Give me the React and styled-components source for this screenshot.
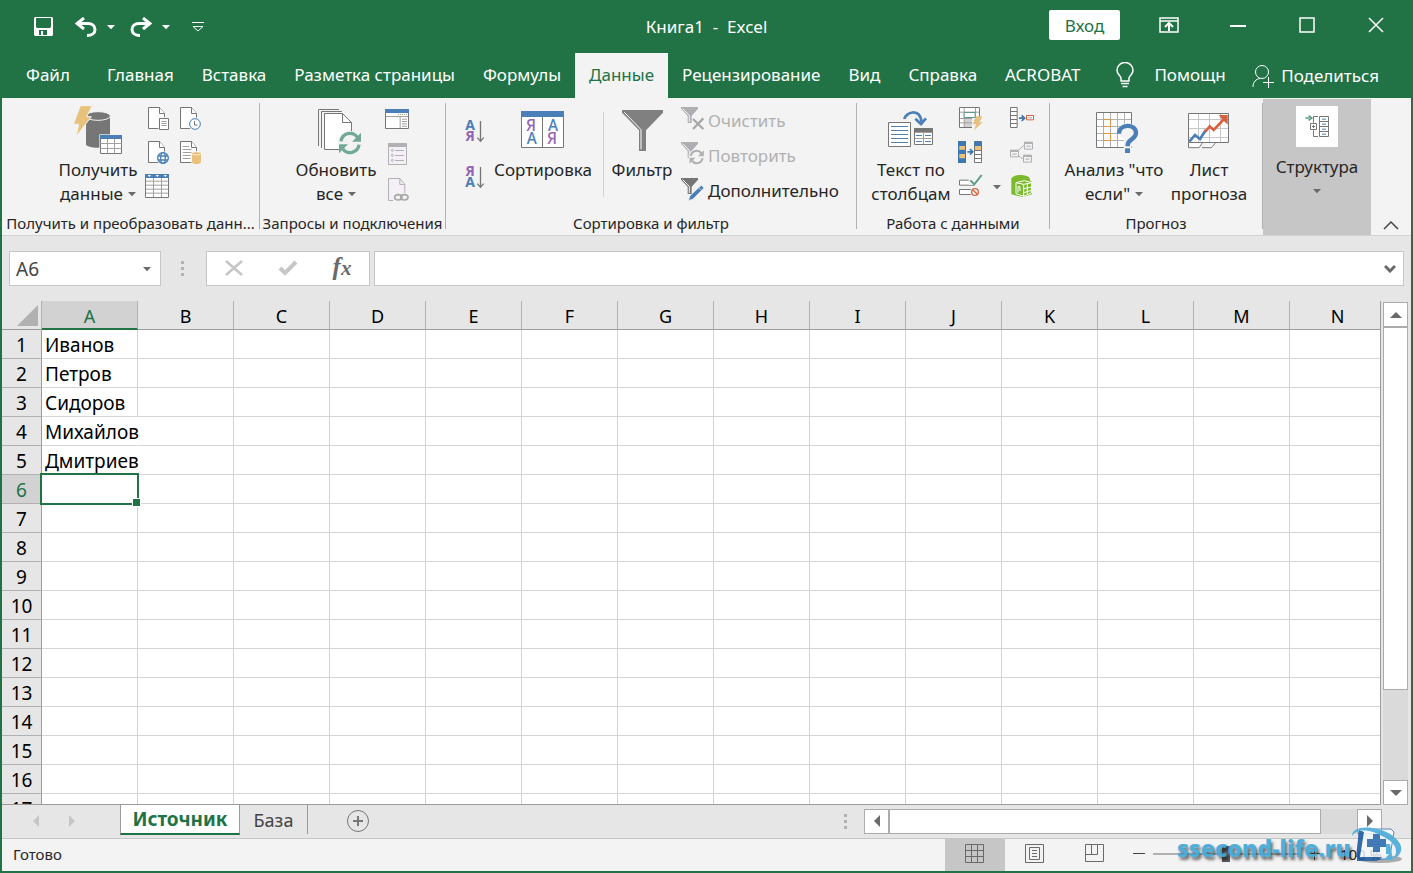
import React, { useState } from "react";
import styled, { createGlobalStyle } from "styled-components";

const GlobalStyle = createGlobalStyle`
  * {
    box-sizing: border-box;
  }
  body {
    margin: 0;
    font-family: "Noto Sans", "Open Sans", sans-serif;
    font-size: 17px;
    color: #262626;
  }
  button, input {
    font: inherit;
    color: inherit;
    margin: 0;
    padding: 0;
    border: 0;
    background: none;
  }
  svg {
    display: block;
    flex: none;
  }
`;

const Window = styled.div`
  display: flex;
  flex-direction: column;
  height: 100vh;
  background: #e6e6e6;
  border: 2px solid #217346;
  border-top: 0;
  overflow: hidden;
`;

/* title bar */

const TitleBar = styled.header`
  display: grid;
  grid-template-columns: 1fr auto 1fr;
  align-items: center;
  height: 53px;
  background: #217346;
  color: #fff;
`;

const QuickAccess = styled.div`
  display: flex;
  align-items: center;
  padding-left: 30px;
`;

const QuickButton = styled.button`
  display: flex;
  align-items: center;
  justify-content: center;
  width: ${(p) => p.$width}px;
  height: 32px;
  margin-right: ${(p) => p.$space || 0}px;
`;

const Title = styled.h1`
  margin: 0;
  font-size: 17px;
  font-weight: 400;
  white-space: pre;
`;

const WindowControls = styled.div`
  display: flex;
  align-items: center;
  justify-content: flex-end;
  padding-right: 1px;
`;

const SignIn = styled.button`
  width: 71px;
  height: 30px;
  margin: 0 14px 3px 0;
  border-radius: 2px;
  background: #fff;
  color: #217346;
`;

const ControlButton = styled.button`
  display: flex;
  align-items: center;
  justify-content: center;
  width: 69px;
  height: 50px;
  margin-bottom: 3px;
`;

/* ribbon tabs */

const TabRow = styled.nav`
  display: flex;
  height: 45px;
  padding-left: 10px;
  background: #217346;
  color: #fff;
`;

const Tab = styled.button`
  height: 45px;
  padding: 0 14px 2px;
  white-space: nowrap;
  margin-right: ${(p) => (p.$file ? 9 : 0)}px;
  background: ${(p) => (p.$active ? "#f3f3f3" : "transparent")};
  color: ${(p) => (p.$active ? "#217346" : "#fff")};
`;

const TabTool = styled.button`
  display: flex;
  align-items: center;
  gap: ${(p) => p.$gap}px;
  margin-left: ${(p) => (p.$end ? "auto" : "22px")};
  padding: ${(p) => (p.$end ? "0 32px 0 0" : "0 0 2px")};
  white-space: nowrap;
`;

/* ribbon */

const Ribbon = styled.section`
  display: flex;
  height: 138px;
  background: #f3f3f3;
  border-bottom: 1px solid #d2d2d2;
`;

const Group = styled.div`
  display: flex;
  flex-direction: column;
  width: ${(p) => p.$width}px;
`;

const GroupBody = styled.div`
  display: flex;
  flex: 1;
  padding-left: ${(p) => p.$pad || 0}px;
`;

const GroupLabel = styled.div`
  height: 23px;
  line-height: 22px;
  font-size: 15px;
  text-align: center;
  white-space: nowrap;
`;

const Divider = styled.div`
  width: 1px;
  margin: ${(p) => (p.$inner ? "14px 0 15px 7px" : "5px 0 6px")};
  background: ${(p) => (p.$inner ? "#d2d2d2" : "#b1b1b1")};
`;

const BigButton = styled.button`
  display: flex;
  flex-direction: column;
  align-items: center;
  width: ${(p) => p.$width}px;
  padding-top: 8px;
  line-height: 24px;
  white-space: nowrap;
`;

const IconGrid = styled.div`
  display: grid;
  grid-template-columns: ${(p) => p.$columns};
  grid-auto-rows: 34px;
  padding-top: 4px;
`;

const SmallButton = styled.button`
  display: flex;
  align-items: center;
  justify-content: center;
`;

const SortColumn = styled.div`
  display: flex;
  flex-direction: column;
  padding-top: 10px;
`;

const FilterList = styled.div`
  display: flex;
  flex-direction: column;
  padding-top: 5px;
`;

const FilterButton = styled.button`
  display: flex;
  align-items: center;
  gap: 2px;
  height: 35px;
  color: #262626;
  &:disabled {
    color: #b1b1b1;
  }
`;

const OutlineButton = styled.button`
  display: flex;
  flex-direction: column;
  align-items: center;
  gap: 8px;
  width: 108px;
  margin-top: 1px;
  padding-top: 7px;
  background: #c6c6c6;
  line-height: 24px;
`;

const OutlineIcon = styled.span`
  display: flex;
  align-items: center;
  justify-content: center;
  width: 42px;
  height: 41px;
  background: #fff;
`;

const CollapseButton = styled.button`
  display: flex;
  flex: 1;
  align-items: flex-end;
  justify-content: center;
  padding-bottom: 5px;
`;

const ArrowLine = styled.span`
  display: flex;
  align-items: center;
  gap: 5px;
`;

/* formula bar */

const FormulaRow = styled.div`
  display: flex;
  height: 65px;
  padding: 15px 7px;
`;

const Box = styled.div`
  display: flex;
  align-items: center;
  height: 35px;
  background: #fff;
  border: 1px solid #c6c6c6;
`;

const NameBox = styled(Box)`
  width: 152px;
  padding: 0 9px 0 6px;
  font-size: 19px;
  color: #444;
`;

const NameInput = styled.input`
  flex: 1;
  min-width: 0;
  outline: none;
`;

const Grip = styled.div`
  display: flex;
  flex-direction: column;
  justify-content: center;
  gap: 3px;
  width: 3px;
  margin: ${(p) => p.$margin};
  &::before, &::after, & span {
    content: "";
    width: 3px;
    height: 3px;
    background: #b1b1b1;
  }
`;

const FormulaButtons = styled(Box)`
  width: 164px;
  margin-right: 4px;
`;

const FormulaButton = styled.button`
  display: flex;
  flex: 1;
  align-items: center;
  justify-content: center;
  padding-bottom: 2px;
  font-family: "Liberation Serif", serif;
  font-size: 25px;
  font-style: italic;
  font-weight: 700;
  line-height: 24px;
  color: #6a6a6a;
  small {
    font-size: 21px;
  }
`;

const FormulaInputBox = styled(Box)`
  flex: 1;
  padding: 0 7px;
`;

/* sheet */

const SheetArea = styled.div`
  display: flex;
  flex: 1;
  min-height: 0;
`;

const SheetView = styled.div`
  flex: 1;
  min-width: 0;
  overflow: hidden;
  border-right: 1px solid #9b9b9b;
  border-bottom: 1px solid #9b9b9b;
  background: linear-gradient(#e6e6e6 29px, #fff 29px);
`;

const Table = styled.table`
  width: 1384px;
  table-layout: fixed;
  border-collapse: separate;
  border-spacing: 0;
  font-size: 19px;
  color: #000;
`;

const Corner = styled.th`
  width: 40px;
  height: 29px;
  padding: 0 3px 3px 15px;
  vertical-align: bottom;
  background: #e6e6e6;
  border-right: 1px solid #b1b1b1;
  border-bottom: 1px solid #9b9b9b;
`;

const ColumnHead = styled.th`
  width: 96px;
  height: 29px;
  padding: ${(p) => (p.$active ? 4 : 3)}px 0 0;
  font-size: 18px;
  font-weight: 400;
  line-height: ${(p) => (p.$active ? 23 : 25)}px;
  color: ${(p) => (p.$active ? "#217346" : "#000")};
  background: ${(p) => (p.$active ? "#d2d2d2" : "#e6e6e6")};
  border-right: 1px solid #b1b1b1;
  border-bottom: ${(p) => (p.$active ? "2px solid #217346" : "1px solid #9b9b9b")};
`;

const RowHead = styled.th`
  height: 29px;
  padding: 2px 0 0;
  font-weight: 400;
  line-height: 26px;
  color: ${(p) => (p.$active ? "#217346" : "#000")};
  background: ${(p) => (p.$active ? "#d2d2d2" : "#e6e6e6")};
  border-right: 1px solid ${(p) => (p.$active ? "#217346" : "#9b9b9b")};
  border-bottom: 1px solid #b1b1b1;
`;

const Cell = styled.td`
  position: relative;
  height: 29px;
  padding: 2px 0 0 3px;
  line-height: 26px;
  white-space: nowrap;
  border-right: 1px solid ${(p) => (p.$spill ? "transparent" : "#d4d4d4")};
  border-bottom: 1px solid #d4d4d4;
`;

const Selection = styled.span`
  position: absolute;
  inset: -2px -2px -2px -2px;
  z-index: 1;
  border: 2px solid #217346;
  &::after {
    content: "";
    position: absolute;
    right: -4px;
    bottom: -4px;
    width: 7px;
    height: 7px;
    background: #217346;
    border: 1px solid #fff;
  }
`;

const VScroll = styled.div`
  display: flex;
  flex-direction: column;
  width: 25px;
  margin: 1px 3px 0 2px;
  background: #dadada;
`;

const HScroll = styled.div`
  display: flex;
  width: 518px;
  height: 25px;
  margin-right: 29px;
  background: #dadada;
`;

const ScrollButton = styled.button`
  display: flex;
  flex: none;
  align-items: center;
  justify-content: center;
  width: 25px;
  height: 25px;
  background: #fff;
  border: 1px solid #ababab;
`;

const ScrollThumb = styled.div`
  flex: ${(p) => p.$size};
  background: #fff;
  border: 1px solid #ababab;
`;

const ScrollGap = styled.div`
  flex: ${(p) => p.$size};
`;

const SheetBar = styled.div`
  display: flex;
  align-items: center;
  height: 33px;
  padding-bottom: 1px;
`;

const SheetNav = styled.div`
  display: flex;
  gap: 24px;
  width: 118px;
  padding-left: 28px;
`;

const SheetTab = styled.button`
  align-self: flex-start;
  width: ${(p) => (p.$active ? 120 : 68)}px;
  height: ${(p) => (p.$active ? 30 : 29)}px;
  font-size: ${(p) => (p.$active ? 19 : 18)}px;
  line-height: 26px;
  font-weight: ${(p) => (p.$active ? 700 : 400)};
  color: ${(p) => (p.$active ? "#217346" : "#444")};
  background: ${(p) => (p.$active ? "#fff" : "transparent")};
  border: solid #9b9b9b;
  border-width: 0 1px;
  border-left-width: ${(p) => (p.$active ? 1 : 0)}px;
  ${(p) => p.$active && "border-bottom: 2px solid #217346;"}
`;

const AddSheet = styled.button`
  margin-left: 38px;
`;

/* status bar */

const StatusBar = styled.footer`
  position: relative;
  display: flex;
  align-items: center;
  height: 33px;
  background: #f3f3f3;
  border-top: 1px solid #c6c6c6;
`;

const StatusText = styled.div`
  flex: 1;
  padding: 0 0 2px 11px;
  font-size: 15px;
`;

const ViewButton = styled.button`
  display: flex;
  align-items: center;
  justify-content: center;
  width: 60px;
  height: 32px;
  padding: 0 1px 3px 0;
  background: ${(p) => (p.$active ? "#c6c6c6" : "transparent")};
`;

const ZoomControl = styled.div`
  display: flex;
  align-items: center;
  gap: 8px;
  width: 286px;
  padding: 0 29px 2px 8px;
  font-size: 15px;
  white-space: nowrap;
`;

const ZoomSlider = styled.input`
  flex: 1;
  min-width: 0;
  height: 16px;
  appearance: none;
  background: linear-gradient(#b1b1b1, #b1b1b1) center / 100% 2px no-repeat;
  &::-webkit-slider-thumb {
    appearance: none;
    width: 8px;
    height: 16px;
    background: #5c5c5c;
  }
`;

const ZoomValue = styled.span`
  margin-left: 12px;
`;

const Watermark = styled.div`
  position: absolute;
  right: 8px;
  bottom: 7px;
  display: flex;
  align-items: flex-end;
  pointer-events: none;
  opacity: 0.9;
  font-family: "Open Sans", "Noto Sans", sans-serif;
  font-size: 23px;
  font-weight: 800;
  line-height: 32px;
  color: #3fa6d8;
  text-shadow: 2px 3px 3px rgba(0, 0, 0, 0.6);
`;

/* Drawings use three units per pixel so that outlines fall on whole pixels. */
const Icon = ({ box, children }) => {
  const [, , w, h] = box;
  return (
    <svg
      width={w / 3}
      height={h / 3}
      viewBox={box.join(" ")}
      fill="none"
      stroke="#767676"
      strokeWidth="3"
      aria-hidden="true"
    >
      {children}
    </svg>
  );
};

const Arrow = ({ dir = "down", size = 9, color = "#6a6a6a" }) => {
  const turn = { down: 0, left: 90, up: 180, right: 270 }[dir];
  return (
    <svg width={size} height={size} viewBox="0 0 10 10" aria-hidden="true">
      <path d="M0 2.5h10L5 7.7z" fill={color} transform={`rotate(${turn} 5 5)`} />
    </svg>
  );
};

const ScrollArrow = ({ dir = "down", color = "#6a6a6a" }) => {
  const turn = { down: 0, left: 90, up: 180, right: 270 }[dir];
  return (
    <svg width="12" height="12" viewBox="0 0 12 12" aria-hidden="true">
      <path d="M0 3h12L6 9z" fill={color} transform={`rotate(${turn} 6 6)`} />
    </svg>
  );
};

const Page = ({ x, y, color = "#767676", fill = "#fff" }) => (
  <g stroke={color}>
    <path d={`M${x} ${y}h33l15 18v45h-48z`} fill={fill} />
    <path d={`M${x + 33} ${y}v18h15`} fill={fill} />
  </g>
);

const GetDataIcon = () => (
  <Icon box={[219, 30, 150, 156]}>
    <path d="M258 60v84c0 15 72 15 72 0V60z" fill="#767676" stroke="none" />
    <ellipse cx="294" cy="60" rx="37" ry="13" fill="#767676" stroke="#f3f3f3" />
    <path d="M241 29h36l-17 33h14l-46 60 8-37h-16z" fill="#e8c27d" stroke="#f3f3f3" />
    <path d="M298 115h72v62h-72z" fill="#f3f3f3" stroke="none" />
    <path d="M301.500 118.500h63v54h-63z" fill="#fff" />
    <path d="M300 117h66v12h-66z" fill="#4a7fb8" stroke="none" />
    <path d="M301 142.500h64M301 157.500h64M322.500 129v43M343.500 129v43" stroke="#a0a0a0" />
  </Icon>
);

const TextFileIcon = () => (
  <Icon box={[426, 18, 96, 102]}>
    <Page x={445.5} y={34.5} />
    <path d="M475 63h36v42h-36z" fill="#f3f3f3" stroke="none" />
    <path d="M478.500 67.500h27v33h-27z" fill="#fff" />
    <path d="M484 76.500h16M484 82.500h16M484 88.500h16" stroke="#a0a0a0" />
  </Icon>
);

const RecentIcon = () => (
  <Icon box={[522, 18, 96, 102]}>
    <Page x={541.5} y={34.5} />
    <circle cx="585" cy="84" r="20" fill="#f3f3f3" stroke="none" />
    <circle cx="585" cy="84" r="16" fill="#fff" stroke="#4a7fb8" />
    <path d="M583.500 75v12h9" />
  </Icon>
);

const WebIcon = () => (
  <Icon box={[426, 120, 96, 102]}>
    <Page x={445.5} y={136.5} />
    <circle cx="489" cy="186" r="20" fill="#f3f3f3" stroke="none" />
    <g stroke="#4a7fb8" strokeWidth="4">
      <circle cx="489" cy="186" r="16" fill="#fff" />
      <ellipse cx="489" cy="186" rx="7" ry="16" />
      <path d="M474 180h30M474 192h30" />
    </g>
  </Icon>
);

const SourceIcon = () => (
  <Icon box={[522, 120, 96, 102]}>
    <Page x={541.5} y={136.5} />
    <path d="M548 151.500h19M548 160.500h27M548 169.500h34M548 178.500h24M548 187.500h24" stroke="#a0a0a0" />
    <path d="M574 166h32v40h-32z" fill="#f3f3f3" stroke="none" />
    <path d="M576 173v26c0 7 27 7 27 0v-26z" fill="#e8c27d" stroke="none" />
    <ellipse cx="589.500" cy="172" rx="14" ry="5" fill="#e8c27d" stroke="#fff" strokeWidth="2" />
  </Icon>
);

const TableIcon = () => (
  <Icon box={[426, 222, 96, 102]}>
    <path d="M436.500 235.500h69v69h-69z" fill="#fff" />
    <path d="M435 234h72v12h-72z" fill="#4a7fb8" stroke="none" />
    <path d="M443 237h10l-5 6zM467 237h10l-5 6zM491 237h10l-5 6z" fill="#fff" stroke="none" />
    <path d="M438 255.500h66M438 267.500h66M438 279.500h66M438 291.500h66M460.500 246v57M484.500 246v57" stroke="#a0a0a0" />
  </Icon>
);

const RefreshArrows = ({ x, y, scale = 1, color = "#73a999" }) => (
  <g transform={`translate(${x} ${y}) scale(${scale})`} stroke={color} strokeWidth="10">
    <path d="M-27 -5A27 27 0 0 1 22 -17" />
    <path d="M27 5A27 27 0 0 1 -22 17" />
    <path d="M33 -31v27H6zM-33 31V4h27z" fill={color} stroke="none" />
  </g>
);

const RefreshIcon = () => (
  <Icon box={[165, 30, 156, 156]}>
    <path d="M190.500 150V40.500h61M199.500 156V46.500h61" />
    <path d="M208.500 52.500h54l27 27v81h-81z" fill="#fff" />
    <path d="M262.500 52.500v27h27" />
    <circle cx="285" cy="141" r="36" fill="#f3f3f3" stroke="none" />
    <RefreshArrows x={285} y={141} />
  </Icon>
);

const QueriesIcon = () => (
  <Icon box={[378, 18, 96, 102]}>
    <path d="M391.500 40.500h69v57h-69z" fill="#fff" />
    <path d="M390 39h72v12h-72z" fill="#4a7fb8" stroke="none" />
    <path d="M393 61.500h66M435.500 63v33" stroke="#a0a0a0" />
    <path d="M429 55.500h30" stroke="#a0a0a0" strokeDasharray="3 3" />
    <path d="M441 69.500h15M441 76.500h15M441 83.500h15M441 90.500h15" stroke="#a0a0a0" />
  </Icon>
);

const PropertiesIcon = () => (
  <Icon box={[378, 120, 96, 102]}>
    <path d="M400.500 142.500h54v63h-54z" fill="#f5f0f7" stroke="#b1b1b1" />
    <path d="M399 141h57v12h-57z" fill="#b1b1b1" stroke="none" />
    <g stroke="#b1b1b1">
      <circle cx="412" cy="163" r="3" />
      <circle cx="412" cy="178" r="3" />
      <circle cx="412" cy="193" r="3" />
      <path d="M420 163.500h27M420 178.500h27M420 193.500h27" />
    </g>
  </Icon>
);

const LinksIcon = () => (
  <Icon box={[378, 222, 96, 102]}>
    <path d="M400.500 247.500h34l15 18v48h-49z" fill="#f5f0f7" stroke="#b1b1b1" />
    <path d="M434.500 247.500v18h15" stroke="#b1b1b1" />
    <path d="M414 291h50v26h-50z" fill="#f3f3f3" stroke="none" />
    <g stroke="#a8a8a8" strokeWidth="5">
      <ellipse cx="430" cy="304" rx="11" ry="8" />
      <ellipse cx="448" cy="304" rx="11" ry="8" />
    </g>
  </Icon>
);

const Letter = ({ x, y, size = 42, weight = 700, children }) => (
  <text
    x={x}
    y={y}
    textAnchor="middle"
    fontSize={size}
    fontWeight={weight}
    fill={children === "А" ? "#4a7fb8" : "#9463b5"}
    stroke="none"
  >
    {children}
  </text>
);

const SortIcon = ({ first, second }) => (
  <Icon box={[54, 36, 96, 138]}>
    <Letter x={90} y={102}>{first}</Letter>
    <Letter x={90} y={135}>{second}</Letter>
    <path d="M121.500 75v60M112 125l9.500 11 9.500-11" strokeWidth="4" />
  </Icon>
);

const SortDialogIcon = () => (
  <Icon box={[234, 30, 150, 156]}>
    <path d="M244.500 46.500h126v108h-126z" fill="#fff" />
    <path d="M243 45h129v18H243z" fill="#4a7fb8" stroke="none" />
    <path d="M307.500 63v90" />
    <Letter x={273} y={105} size={46} weight={500}>Я</Letter>
    <Letter x={275} y={144} size={46} weight={500}>А</Letter>
    <Letter x={339} y={105} size={46} weight={500}>А</Letter>
    <Letter x={336} y={144} size={46} weight={500}>Я</Letter>
  </Icon>
);

const FilterIcon = () => (
  <Icon box={[534, 30, 150, 156]}>
    <path d="M549 42h123v8l-51 53v62h-21v-62l-51-53z" fill="#808080" stroke="none" />
    <path d="M556 49l50 52v59" stroke="#fff" />
  </Icon>
);

const SmallFunnel = ({ y, color }) => (
  <g>
    <path d={`M723 ${y}h51v5l-19 21v22h-12v-22l-20-21z`} fill={color} stroke="none" />
    <path d={`M728 ${y + 5}l20 20v20`} stroke="#f3f3f3" />
  </g>
);

const ClearIcon = () => (
  <Icon box={[720, 24, 78, 105]}>
    <SmallFunnel y={36} color="#b1aeb3" />
    <path d="M759 72l31 30M790 70l-31 32" stroke="#a8a8a8" strokeWidth="7" />
  </Icon>
);

const ReapplyIcon = () => (
  <Icon box={[720, 129, 78, 105]}>
    <SmallFunnel y={141} color="#b1aeb3" />
    <circle cx="770" cy="186" r="24" fill="#f3f3f3" stroke="none" />
    <RefreshArrows x={770} y={186} scale={0.65} color="#b1b1b1" />
  </Icon>
);

const AdvancedIcon = () => (
  <Icon box={[720, 231, 78, 105]}>
    <SmallFunnel y={246} color="#767676" />
    <path d="M745 314l5-15 34-31 8 8-33 33z" fill="#4a7fb8" stroke="#f3f3f3" strokeWidth="2" />
    <path d="M777 275l8 8" stroke="#f3f3f3" strokeWidth="2" />
  </Icon>
);

const TextColumnsIcon = () => (
  <Icon box={[105, 30, 156, 156]}>
    <path d="M163 69c4-20 45-35 52 8" stroke="#4a7fb8" strokeWidth="8" />
    <path d="M196 68l17 16 15-17" stroke="#4a7fb8" strokeWidth="8" />
    <path d="M115.500 79.500h66v72h-66z" fill="#fff" />
    <path d="M123 91.500h51M123 103.500h51M123 115.500h51M123 127.500h51M123 139.500h51" stroke="#4a7fb8" />
    <path d="M193.500 97.500h54v48h-54z" fill="#fff" />
    <path d="M192 96h57v14h-57z" fill="#767676" stroke="none" />
    <path d="M220.500 109v36M194 127.500h54" stroke="#a0a0a0" />
    <path d="M198 118.500h18M225 118.500h18M198 136.500h18M225 136.500h18" stroke="#4a7fb8" />
  </Icon>
);

const FlashFillIcon = () => (
  <Icon box={[315, 18, 96, 102]}>
    <path d="M328.500 34.500h60v60h-60z" fill="#fff" />
    <path d="M342 67h36v26h-36z" fill="#d2d2d2" stroke="none" />
    <path d="M342.500 36v57M376.500 36v57M330 48.500h57M330 67.500h57M330 80.500h57" stroke="#a0a0a0" />
    <path d="M342.500 49.500h33v15h-33z" fill="#fff" stroke="#5c9c84" />
    <path d="M366 66h30v34h-30z" fill="#f3f3f3" stroke="none" />
    <path d="M378 61h19l-8 18h9l-26 24 6-18h-10z" fill="#e8c27d" stroke="none" />
  </Icon>
);

const DuplicatesIcon = () => (
  <Icon box={[315, 120, 96, 102]}>
    <path d="M325.500 136.500h21v63h-21zM373.500 136.500h21v63h-21z" fill="#fff" />
    <path d="M324 135h24v66h-24zM373 136h22v14h-22z" fill="#3f78b0" stroke="none" />
    <path d="M328 150h17v11h-17zM328 174h17v13h-17zM375 150h18v13h-18z" fill="#e8c27d" stroke="none" />
    <path d="M375 163.500h18M375 175.500h18M375 187.500h18" />
    <path d="M352 167.500h14M360 159l8 8.500-8 8.500" stroke="#3f78b0" strokeWidth="5" />
  </Icon>
);

const ValidationIcon = () => (
  <Icon box={[315, 222, 96, 102]}>
    <path d="M328.500 252.500h44v15h-44zM328.500 280.500h44v15h-44z" fill="#fff" />
    <path d="M356 244h38v22h-38z" fill="#f3f3f3" stroke="none" />
    <path d="M361 253l12 12 22-28" stroke="#5c9c84" strokeWidth="6" />
    <circle cx="375" cy="288" r="15" fill="#f3f3f3" stroke="none" />
    <circle cx="375" cy="288" r="10" fill="#fff" stroke="#d9603f" strokeWidth="4" />
    <path d="M368 281l14 14" stroke="#d9603f" strokeWidth="4" />
  </Icon>
);

const ConsolidateIcon = () => (
  <Icon box={[471, 18, 96, 102]}>
    <path d="M481.500 34.500h20v60h-20z" fill="#fff" />
    <path d="M481 46.500h20M481 58.500h20M481 70.500h20M481 82.500h20" />
    <path d="M507 66.500h13M515 58l9 8.500-9 8.500" stroke="#3f78b0" strokeWidth="5" />
    <path d="M529.500 58.500h21v13h-21z" fill="#fff" stroke="#d9603f" />
    <path d="M534 65.500h12" stroke="#a0a0a0" />
  </Icon>
);

const RelationsIcon = () => (
  <Icon box={[471, 120, 96, 102]}>
    <g stroke="#b1b1b1">
      <path d="M504 164l19-17M504 179l19 12" />
      <path d="M481.500 162.500h24v20h-24zM523.500 138.500h24v21h-24zM520.500 177.500h24v21h-24z" fill="#f5f0f7" />
      <path d="M481 165h24M523 141h24M520 180h24" strokeWidth="6" />
      <path d="M487 174.500h13M529 150.500h13M526 189.500h13" />
    </g>
  </Icon>
);

const DataModelIcon = () => (
  <Icon box={[471, 222, 96, 102]}>
    <path d="M484 247c8-14 48-12 55 0l2 8 5 2v38l-28 8-34-8z" fill="#7cba2d" stroke="none" />
    <path d="M498 260l25-6 22 6-1 31-23 10-23-8z" fill="#7cba2d" stroke="#fff" />
    <path d="M521 265v36M532 263v34M521 278l24-5M521 290l24-7M498 260l23 5 24-5M504 290v-18h6v13" stroke="#fff" />
  </Icon>
);

const WhatIfIcon = () => (
  <Icon box={[144, 30, 156, 156]}>
    <path d="M169.500 49.500h105v105h-105z" fill="#fff" />
    <path d="M190.500 51v102M211.500 51v102M232.500 51v102M253.500 51v102M171 70.500h102M171 91.500h102M171 112.500h102M171 133.500h102" stroke="#b1b1b1" />
    <path d="M190.500 70.500h21v21h-21zM190.500 112.500h21v21h-21z" fill="#fff" stroke="#e39445" />
    <path d="M231 112a30 30 0 0 1 62 0l-20 44h-22v-28z" fill="#f3f3f3" stroke="none" />
    <path d="M237 113c0-31 51-31 51-2 0 20-25 18-25 36v4" stroke="#4a7fb8" strokeWidth="13" />
    <path d="M255 157h15v14h-15z" fill="#4a7fb8" stroke="none" />
  </Icon>
);

const ForecastIcon = () => (
  <Icon box={[429, 30, 156, 156]}>
    <path d="M445.500 139v16h32l10-15M486 155h28l13-15" fill="#fff" />
    <path d="M445.500 52.500h120v87h-120z" fill="#fff" />
    <path d="M475.500 54v84M508.500 54v84M541.500 54v84M447 70.500h117M447 97.500h117M447 124.500h117" stroke="#c6c6c6" />
    <path d="M448 137l17-20 15 12 18-28" stroke="#4a7fb8" strokeWidth="8" />
    <path d="M495 108l14-17 12 11 36-38" stroke="#d9603f" strokeWidth="8" />
    <path d="M536 57h27v29l-9-9-11-11z" fill="#d9603f" stroke="none" />
  </Icon>
);

const GroupOutlineIcon = () => (
  <Icon box={[795, 54, 75, 75]}>
    <path d="M796 66h12M806 59l9 7-9 7" stroke="#5c9c84" strokeWidth="5" />
    <path d="M834 61.500h-13.500V80M820.500 103v18.500H834M811.500 82.500h18v18h-18zM816 91.500h9M820.500 87v9" />
    <path d="M838.500 61.500h27v60h-27zM838 76.500h27M838 91.500h27M838 106.500h27" fill="#fff" />
    <path d="M846 69.500h12M846 84.500h12M846 99.500h12M846 114.500h12" stroke="#4a7fb8" />
  </Icon>
);

const SaveIcon = () => (
  <svg width="19" height="19" viewBox="0 0 19 19" aria-hidden="true">
    <path fillRule="evenodd" fill="#fff" d="M1 0h17l1 1v17l-1 1H1l-1-1V1zM2 1v9l1 1h13l1-1V1zM5 13v5h2v-4h2v4h4v-5z" />
  </svg>
);

const UndoIcon = ({ flip }) => (
  <svg width="22" height="20" viewBox="0 0 22 20" fill="none" stroke="#fff" strokeWidth="3" aria-hidden="true">
    <g transform={flip ? "translate(22 0) scale(-1 1)" : undefined}>
      <path d="M9 1L2 6.500 9 12M2.500 6.500H13c4 0 7 2.500 7 6s-3 6-8 6" />
    </g>
  </svg>
);

const WatermarkLogo = () => (
  <svg width="52" height="38" viewBox="0 0 52 38" aria-hidden="true">
    <ellipse cx="29" cy="33" rx="22" ry="4" fill="#444" opacity=".45" />
    <path d="M8 3h32l3 3-4 24-4 3H7z" fill="#f4f8fc" stroke="#3c72b0" opacity=".9" />
    <path d="M8 4L5 31h4l4-25zM6 31h25l-5 4H6z" fill="#225ba0" />
    <path d="M33 34l5-6h-3V18h4l3 16z" fill="#4aabd9" />
    <path d="M22 8h7v5h6v8h-6v5h-7v-5h-6v-8h6z" fill="#2f6db2" />
    <path d="M1 10C1-1 24-1 39 8c14 9 15 19 3 25 7-9 1-17-9-22C21 4 7 1 1 10z" fill="#4aabd9" />
  </svg>
);

const tabs = [
  "Файл",
  "Главная",
  "Вставка",
  "Разметка страницы",
  "Формулы",
  "Данные",
  "Рецензирование",
  "Вид",
  "Справка",
  "ACROBAT",
];

const columns = "ABCDEFGHIJKLMN".split("");
const names = ["Иванов", "Петров", "Сидоров", "Михайлов", "Дмитриев"];
const rows = Array.from({ length: 17 }, (_, i) => i + 1);
const sheets = ["Источник", "База"];

const App = () => {
  const [activeTab, setActiveTab] = useState("Данные");
  const [activeSheet, setActiveSheet] = useState("Источник");
  const [selected, setSelected] = useState({ column: "A", row: 6 });
  const [formula, setFormula] = useState("");
  const [zoom, setZoom] = useState(100);

  return (
    <Window>
      <GlobalStyle />
      <TitleBar>
        <QuickAccess>
          <QuickButton $width={22} $space={10} aria-label="Сохранить"><SaveIcon /></QuickButton>
          <QuickButton $width={43} aria-label="Отменить"><UndoIcon /></QuickButton>
          <QuickButton $width={8} $space={4} aria-label="Список отмены"><Arrow color="#fff" size={8} /></QuickButton>
          <QuickButton $width={43} aria-label="Вернуть"><UndoIcon flip /></QuickButton>
          <QuickButton $width={8} $space={14} aria-label="Список возврата"><Arrow color="#fff" size={8} /></QuickButton>
          <QuickButton $width={28} aria-label="Настройка панели">
            <svg width="12" height="10" viewBox="0 0 12 10" fill="none" stroke="#fff" aria-hidden="true">
              <path d="M0 .5h12M1 4.500h10L6 9z" />
            </svg>
          </QuickButton>
        </QuickAccess>
        <Title>{"Книга1  -  Excel"}</Title>
        <WindowControls>
          <SignIn>Вход</SignIn>
          <ControlButton aria-label="Параметры ленты">
            <svg width="20" height="16" viewBox="0 0 20 16" fill="none" stroke="#fff" aria-hidden="true">
              <path d="M1 1h18v14H1zM1 4h18" strokeWidth="1.500" />
              <path d="M10 14V7M6 10l4-4 4 4" strokeWidth="2" />
            </svg>
          </ControlButton>
          <ControlButton aria-label="Свернуть">
            <svg width="16" height="16" viewBox="0 0 16 16" stroke="#fff" aria-hidden="true">
              <path d="M0 9h16" strokeWidth="2" />
            </svg>
          </ControlButton>
          <ControlButton aria-label="Развернуть">
            <svg width="16" height="16" viewBox="0 0 16 16" fill="none" stroke="#fff" aria-hidden="true">
              <path d="M1 1h14v14H1z" strokeWidth="1.500" />
            </svg>
          </ControlButton>
          <ControlButton aria-label="Закрыть">
            <svg width="16" height="16" viewBox="0 0 16 16" stroke="#fff" strokeWidth="1.500" aria-hidden="true">
              <path d="M1 1l14 14M15 1L1 15" />
            </svg>
          </ControlButton>
        </WindowControls>
      </TitleBar>

      <TabRow>
        {tabs.map((tab) => (
          <Tab
            key={tab}
            $file={tab === "Файл"}
            $active={tab === activeTab}
            onClick={() => setActiveTab(tab)}
          >
            {tab}
          </Tab>
        ))}
        <TabTool $gap={20}>
          <svg width="18" height="26" viewBox="0 0 18 26" fill="none" stroke="#fff" strokeWidth="1.500" aria-hidden="true">
            <path d="M5 19v-3C4 13 1 12 1 8.500a8 8 0 0 1 16 0c0 3.500-3 4.500-4 7.500v3zM5 21.500h8M6.500 24.500h5" />
          </svg>
          Помощн
        </TabTool>
        <TabTool $gap={7} $end>
          <svg width="22" height="24" viewBox="0 0 22 24" fill="none" stroke="#fff" aria-hidden="true">
            <circle cx="10" cy="8" r="6.500" />
            <path d="M1 23c0-5 3-8 7-8.500M16.500 13v11M11 18.500h11" />
          </svg>
          Поделиться
        </TabTool>
      </TabRow>

      <Ribbon>
        <Group $width={257}>
          <GroupBody $pad={52}>
            <BigButton $width={88}>
              <GetDataIcon />
              <span>Получить</span>
              <ArrowLine>данные <Arrow size={8} /></ArrowLine>
            </BigButton>
            <IconGrid $columns="32px 32px">
              <SmallButton aria-label="Из текстового файла"><TextFileIcon /></SmallButton>
              <SmallButton aria-label="Последние источники"><RecentIcon /></SmallButton>
              <SmallButton aria-label="Из Интернета"><WebIcon /></SmallButton>
              <SmallButton aria-label="Существующие подключения"><SourceIcon /></SmallButton>
              <SmallButton aria-label="Из таблицы"><TableIcon /></SmallButton>
            </IconGrid>
          </GroupBody>
          <GroupLabel>Получить и преобразовать данн...</GroupLabel>
        </Group>
        <Divider />

        <Group $width={185}>
          <GroupBody $pad={31}>
            <BigButton $width={90}>
              <RefreshIcon />
              <span>Обновить</span>
              <ArrowLine>все <Arrow size={8} /></ArrowLine>
            </BigButton>
            <IconGrid $columns="32px">
              <SmallButton aria-label="Запросы"><QueriesIcon /></SmallButton>
              <SmallButton aria-label="Свойства" disabled><PropertiesIcon /></SmallButton>
              <SmallButton aria-label="Изменить связи" disabled><LinksIcon /></SmallButton>
            </IconGrid>
          </GroupBody>
          <GroupLabel>Запросы и подключения</GroupLabel>
        </Group>
        <Divider />

        <Group $width={410}>
          <GroupBody $pad={12}>
            <SortColumn>
              <SmallButton aria-label="По возрастанию"><SortIcon first="А" second="Я" /></SmallButton>
              <SmallButton aria-label="По убыванию"><SortIcon first="Я" second="А" /></SmallButton>
            </SortColumn>
            <BigButton $width={106}>
              <SortDialogIcon />
              <span>Сортировка</span>
            </BigButton>
            <Divider $inner />
            <BigButton $width={76}>
              <FilterIcon />
              <span>Фильтр</span>
            </BigButton>
            <FilterList>
              <FilterButton disabled><ClearIcon />Очистить</FilterButton>
              <FilterButton disabled><ReapplyIcon />Повторить</FilterButton>
              <FilterButton><AdvancedIcon />Дополнительно</FilterButton>
            </FilterList>
          </GroupBody>
          <GroupLabel>Сортировка и фильтр</GroupLabel>
        </Group>
        <Divider />

        <Group $width={192}>
          <GroupBody $pad={10}>
            <BigButton $width={88}>
              <TextColumnsIcon />
              <span>Текст по</span>
              <span>столбцам</span>
            </BigButton>
            <IconGrid $columns="32px 20px 32px">
              <SmallButton aria-label="Мгновенное заполнение"><FlashFillIcon /></SmallButton>
              <span />
              <SmallButton aria-label="Консолидация"><ConsolidateIcon /></SmallButton>
              <SmallButton aria-label="Удалить дубликаты"><DuplicatesIcon /></SmallButton>
              <span />
              <SmallButton aria-label="Отношения" disabled><RelationsIcon /></SmallButton>
              <SmallButton aria-label="Проверка данных"><ValidationIcon /></SmallButton>
              <SmallButton aria-label="Варианты проверки"><Arrow size={8} /></SmallButton>
              <SmallButton aria-label="Модель данных"><DataModelIcon /></SmallButton>
            </IconGrid>
          </GroupBody>
          <GroupLabel>Работа с данными</GroupLabel>
        </Group>
        <Divider />

        <Group $width={212}>
          <GroupBody $pad={14}>
            <BigButton $width={100}>
              <WhatIfIcon />
              <span>Анализ "что</span>
              <ArrowLine>если" <Arrow size={8} /></ArrowLine>
            </BigButton>
            <BigButton $width={90}>
              <ForecastIcon />
              <span>Лист</span>
              <span>прогноза</span>
            </BigButton>
          </GroupBody>
          <GroupLabel>Прогноз</GroupLabel>
        </Group>
        <Divider />

        <OutlineButton>
          <OutlineIcon><GroupOutlineIcon /></OutlineIcon>
          <span>Структура</span>
          <Arrow size={8} />
        </OutlineButton>
        <CollapseButton aria-label="Свернуть ленту">
          <svg width="16" height="10" viewBox="0 0 16 10" fill="none" stroke="#444" strokeWidth="1.500" aria-hidden="true">
            <path d="M1 9l7-7 7 7" />
          </svg>
        </CollapseButton>
      </Ribbon>

      <FormulaRow>
        <NameBox>
          <NameInput aria-label="Имя" value={`${selected.column}${selected.row}`} readOnly />
          <Arrow size={8} />
        </NameBox>
        <Grip $margin="0 22px 0 20px"><span /></Grip>
        <FormulaButtons>
          <FormulaButton aria-label="Отмена">
            <svg width="18" height="16" viewBox="0 0 18 16" stroke="#c6c6c6" strokeWidth="2.500" aria-hidden="true">
              <path d="M1 1l16 14M17 1L1 15" />
            </svg>
          </FormulaButton>
          <FormulaButton aria-label="Ввод">
            <svg width="20" height="16" viewBox="0 0 20 16" fill="none" stroke="#c6c6c6" strokeWidth="4" aria-hidden="true">
              <path d="M2 8l5 5L18 2" />
            </svg>
          </FormulaButton>
          <FormulaButton aria-label="Вставить функцию">
            <span>f<small>x</small></span>
          </FormulaButton>
        </FormulaButtons>
        <FormulaInputBox>
          <NameInput aria-label="Строка формул" value={formula} onChange={(e) => setFormula(e.target.value)} />
          <svg width="12" height="9" viewBox="0 0 12 9" fill="none" stroke="#6a6a6a" strokeWidth="3" aria-hidden="true">
            <path d="M1 2l5 5 5-5" />
          </svg>
        </FormulaInputBox>
      </FormulaRow>

      <SheetArea>
        <SheetView>
          <Table>
            <thead>
              <tr>
                <Corner>
                  <svg width="21" height="21" viewBox="0 0 21 21" aria-hidden="true">
                    <path d="M21 0v21H0z" fill="#b1b1b1" />
                  </svg>
                </Corner>
                {columns.map((c) => (
                  <ColumnHead key={c} $active={c === selected.column}>{c}</ColumnHead>
                ))}
              </tr>
            </thead>
            <tbody>
              {rows.map((r) => (
                <tr key={r}>
                  <RowHead $active={r === selected.row}>{r}</RowHead>
                  {columns.map((c) => {
                    const text = c === "A" ? names[r - 1] : "";
                    const isSelected = c === selected.column && r === selected.row;
                    return (
                      <Cell
                        key={c}
                        $spill={text && text.length > 7}
                        onClick={() => setSelected({ column: c, row: r })}
                      >
                        {text}
                        {isSelected && <Selection />}
                      </Cell>
                    );
                  })}
                </tr>
              ))}
            </tbody>
          </Table>
        </SheetView>
        <VScroll>
          <ScrollButton aria-label="Вверх"><ScrollArrow dir="up" /></ScrollButton>
          <ScrollThumb $size={363} />
          <ScrollGap $size={91} />
          <ScrollButton aria-label="Вниз"><ScrollArrow /></ScrollButton>
        </VScroll>
      </SheetArea>

      <SheetBar>
        <SheetNav>
          <ScrollArrow dir="left" color="#c6c6c6" />
          <ScrollArrow dir="right" color="#c6c6c6" />
        </SheetNav>
        {sheets.map((s) => (
          <SheetTab key={s} $active={s === activeSheet} onClick={() => setActiveSheet(s)}>
            {s}
          </SheetTab>
        ))}
        <AddSheet aria-label="Новый лист">
          <svg width="24" height="24" viewBox="0 0 24 24" fill="none" stroke="#767676" aria-hidden="true">
            <circle cx="12" cy="12" r="10.500" />
            <path d="M7 12h10M12 7v10" strokeWidth="2" />
          </svg>
        </AddSheet>
        <Grip $margin="0 17px 0 auto"><span /></Grip>
        <HScroll>
          <ScrollButton aria-label="Влево"><ScrollArrow dir="left" /></ScrollButton>
          <ScrollThumb $size={432} />
          <ScrollGap $size={36} />
          <ScrollButton aria-label="Вправо"><ScrollArrow dir="right" /></ScrollButton>
        </HScroll>
      </SheetBar>

      <StatusBar>
        <StatusText>Готово</StatusText>
        <ViewButton $active aria-label="Обычный">
          <svg width="19" height="19" viewBox="0 0 19 19" fill="none" stroke="#6a6a6a" aria-hidden="true">
            <path d="M.5 .5h18v18H.5zM6.500 0v19M12.500 0v19M0 6.500h19M0 12.500h19" />
          </svg>
        </ViewButton>
        <ViewButton aria-label="Разметка страницы">
          <svg width="19" height="19" viewBox="0 0 19 19" fill="none" stroke="#6a6a6a" aria-hidden="true">
            <path d="M.5 .5h18v18H.5zM4.500 3.500h10v12h-10zM7 6.500h5M7 9.500h5M7 12.500h5" />
          </svg>
        </ViewButton>
        <ViewButton aria-label="Страничный режим">
          <svg width="19" height="19" viewBox="0 0 19 19" fill="none" stroke="#6a6a6a" aria-hidden="true">
            <path d="M.5 .5h18v17H.5zM0 10.500h12.500V0M6.500 0v10" />
          </svg>
        </ViewButton>
        <ZoomControl>
          <button aria-label="Уменьшить">
            <svg width="12" height="12" viewBox="0 0 12 12" stroke="#444" aria-hidden="true">
              <path d="M0 5.500h12" />
            </svg>
          </button>
          <ZoomSlider
            type="range"
            min="10"
            max="190"
            value={zoom}
            aria-label="Масштаб"
            onChange={(e) => setZoom(Number(e.target.value))}
          />
          <button aria-label="Увеличить">
            <svg width="12" height="12" viewBox="0 0 12 12" stroke="#444" aria-hidden="true">
              <path d="M0 5.500h12M6.500 0v12" />
            </svg>
          </button>
          <ZoomValue>{zoom} %</ZoomValue>
        </ZoomControl>
        <Watermark>
          ssecond-life.ru
          <WatermarkLogo />
        </Watermark>
      </StatusBar>
    </Window>
  );
};

export default App;
